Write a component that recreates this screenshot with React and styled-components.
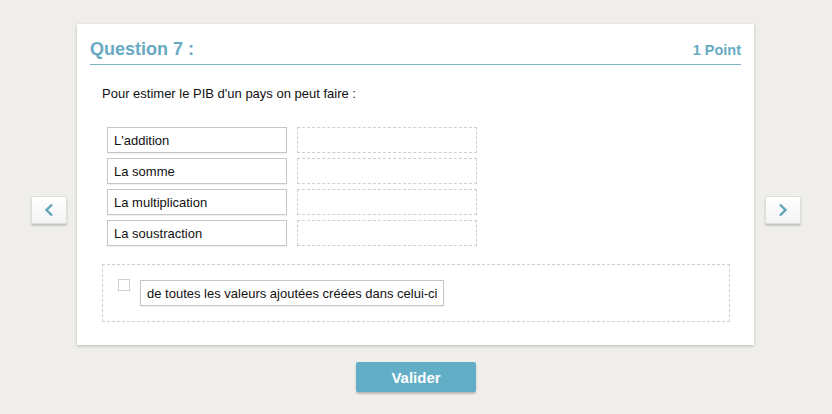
import React from 'react';
import styled, { createGlobalStyle } from 'styled-components';

const GlobalStyle = createGlobalStyle`
  html, body {
    margin: 0;
    padding: 0;
    background: #efeeeb;
    font-family: 'Liberation Sans', Arial, sans-serif;
  }
`;

const answers = ['L\'addition', 'La somme', 'La multiplication', 'La soustraction'];

const Page = () => (
  <PageWrap>
    <GlobalStyle />
    <Stage>
      <NavButton aria-label="previous">
        <svg width="10" height="14" viewBox="0 0 10 14">
          <path d="M8 1.5 L2.5 7 L8 12.5" fill="none" stroke="#5fa3bb" strokeWidth="2.4" />
        </svg>
      </NavButton>

      <Card>
        <Header>
          <Title>Question 7 :</Title>
          <Points>1 Point</Points>
        </Header>

        <Body>
          <Prompt>Pour estimer le PIB d'un pays on peut faire :</Prompt>

          <Pairs>
            {answers.map((item) => (
              <PairRow key={item}>
                <Answer>{item}</Answer>
                <Slot />
              </PairRow>
            ))}
          </Pairs>

          <DropZone>
            <Check />
            <Answer wide>de toutes les valeurs ajoutées créées dans celui-ci</Answer>
          </DropZone>
        </Body>
      </Card>

      <NavButton aria-label="next">
        <svg width="10" height="14" viewBox="0 0 10 14">
          <path d="M2 1.5 L7.5 7 L2 12.5" fill="none" stroke="#5fa3bb" strokeWidth="2.4" />
        </svg>
      </NavButton>
    </Stage>

    <Submit>Valider</Submit>
  </PageWrap>
);

const PageWrap = styled.div`
  width: 832px;
  height: 414px;
  display: flex;
  flex-direction: column;
  align-items: center;
  padding-top: 24px;
  box-sizing: border-box;
`;

const Stage = styled.div`
  display: flex;
  align-items: flex-start;
  gap: 10px;
`;

const NavButton = styled.button`
  width: 36px;
  height: 28px;
  margin-top: 172px;
  padding: 0;
  display: flex;
  align-items: center;
  justify-content: center;
  background: linear-gradient(#ffffff, #f3f3f3);
  border: 1px solid #dcdcdc;
  border-radius: 2px;
  box-shadow: 0 2px 2px rgba(0, 0, 0, 0.18);
  cursor: pointer;
`;

const Card = styled.div`
  width: 677px;
  height: 321px;
  margin-right: 1px;
  box-sizing: border-box;
  background: #fff;
  padding: 15px 13px 0 13px;
  box-shadow: 0 1px 3px rgba(0, 0, 0, 0.22);
`;

const Header = styled.div`
  display: flex;
  justify-content: space-between;
  align-items: baseline;
  height: 25px;
  border-bottom: 1px solid #7db2c4;
  color: #68aac3;
  font-weight: bold;
`;

const Title = styled.div`
  font-size: 18px;
  line-height: 20px;
`;

const Points = styled.div`
  font-size: 14.5px;
  line-height: 20px;
`;

const Body = styled.div`
  padding: 21px 11px 0 12px;
`;

const Prompt = styled.div`
  font-size: 13px;
  line-height: 15px;
  color: #111;
`;

const Pairs = styled.div`
  display: flex;
  flex-direction: column;
  gap: 5px;
  margin: 26px 0 0 5px;
`;

const PairRow = styled.div`
  display: flex;
  gap: 10px;
`;

const Answer = styled.div`
  box-sizing: border-box;
  width: ${(p) => (p.wide ? '304px' : '180px')};
  height: 26px;
  padding-left: 6px;
  display: flex;
  align-items: center;
  background: #fff;
  border: 1px solid #c6c6c6;
  box-shadow: 0 1px 1px rgba(0, 0, 0, 0.06);
  font-size: 13px;
  white-space: nowrap;
  color: #111;
`;

const Slot = styled.div`
  box-sizing: border-box;
  width: 180px;
  height: 26px;
  border: 1px dashed #cfcfcf;
`;

const DropZone = styled.div`
  box-sizing: border-box;
  width: 628px;
  height: 58px;
  margin-top: 18px;
  padding: 14px 0 0 15px;
  display: flex;
  align-items: flex-start;
  gap: 10px;
  border: 1px dashed #cfcfcf;

  & > ${Answer} {
    margin-top: 1px;
  }
`;

const Check = styled.div`
  width: 12px;
  height: 12px;
  box-sizing: border-box;
  border: 1px solid #d0d0d0;
  background: #fff;
`;

const Submit = styled.button`
  margin-top: 17px;
  width: 120px;
  height: 30px;
  border: none;
  border-radius: 2px;
  background: #62aec6;
  color: #fff;
  font-family: 'Liberation Sans', Arial, sans-serif;
  font-weight: bold;
  font-size: 15px;
  box-shadow: 0 2px 2px rgba(0, 0, 0, 0.22);
  cursor: pointer;
`;

export default Page;
